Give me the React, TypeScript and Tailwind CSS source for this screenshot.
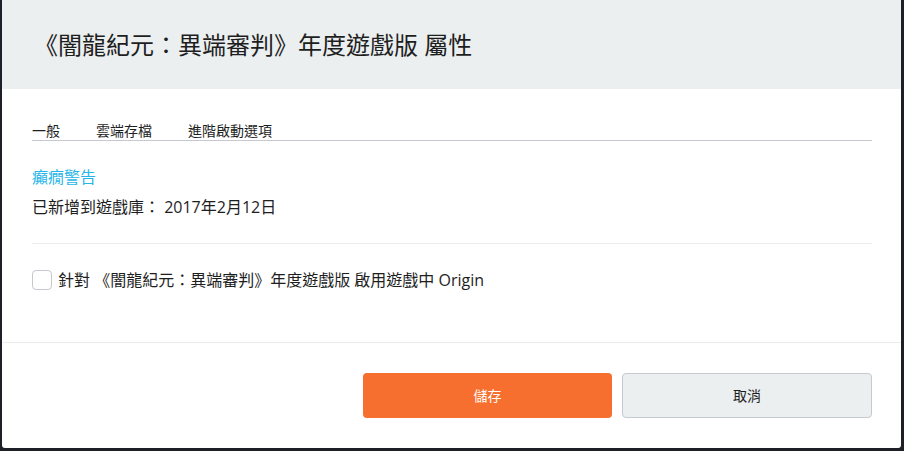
import React, { useState } from "react";

const font = "font-['Open_Sans','Noto_Sans_CJK_TC',sans-serif]";

const tabs = ["一般", "雲端存檔", "進階啟動選項"];

const App = () => {
  const [checked, setChecked] = useState(false);

  return (
    <div className={`flex h-[451px] w-[904px] bg-[#1d2127] pb-[3px] pl-[2px] pr-[3px] ${font}`}>
      <div className="flex flex-1 flex-col overflow-hidden rounded-b-[3px] bg-white text-[#1e1e1e]">
        {/* 標題 */}
        <div className="flex h-[89px] items-center bg-[#ebeff0] pl-[32px] text-[24px] text-[#1e1e1e]">
          《闇龍紀元：異端審判》年度遊戲版 屬性
        </div>

        <div className="flex flex-col pl-[30px] pr-[29px] pt-[33px]">
          <div className="flex gap-[36px] border-b border-[#c8c8d0] text-[14px] leading-[18px]">
            {tabs.map((t) => (
              <span key={t}>{t}</span>
            ))}
          </div>

          <div className="mt-[24px] flex flex-col gap-[6px] text-[16px] leading-[24px]">
            <a className="text-[#28b6e8]">癲癇警告</a>
            <p>已新增到遊戲庫： 2017年2月12日</p>
          </div>

          <div className="mt-[24px] border-t border-[#ececec]" />

          <label className="mt-[26px] flex h-[20px] items-center gap-[6px] text-[16px]">
            <input
              type="checkbox"
              className="h-[20px] w-[20px] appearance-none rounded-[4px] border border-[#c8c8d0] bg-white"
              checked={checked}
              onChange={(e) => setChecked(e.target.checked)}
            />
            針對 《闇龍紀元：異端審判》年度遊戲版 啟用遊戲中 Origin
          </label>
        </div>

        <div className="mt-[52px] border-t border-[#ececec]" />

        <div className="flex justify-end gap-[10px] pr-[29px] pt-[30px] text-[14px]">
          <button className="h-[45px] w-[249px] rounded-[4px] bg-[#f76f2e] text-white">
            儲存
          </button>
          <button className="h-[45px] w-[250px] rounded-[4px] border border-[#c5c9d0] bg-[#ebeff0] text-[#1e1e1e]">
            取消
          </button>
        </div>
      </div>
    </div>
  );
};

export default App;
